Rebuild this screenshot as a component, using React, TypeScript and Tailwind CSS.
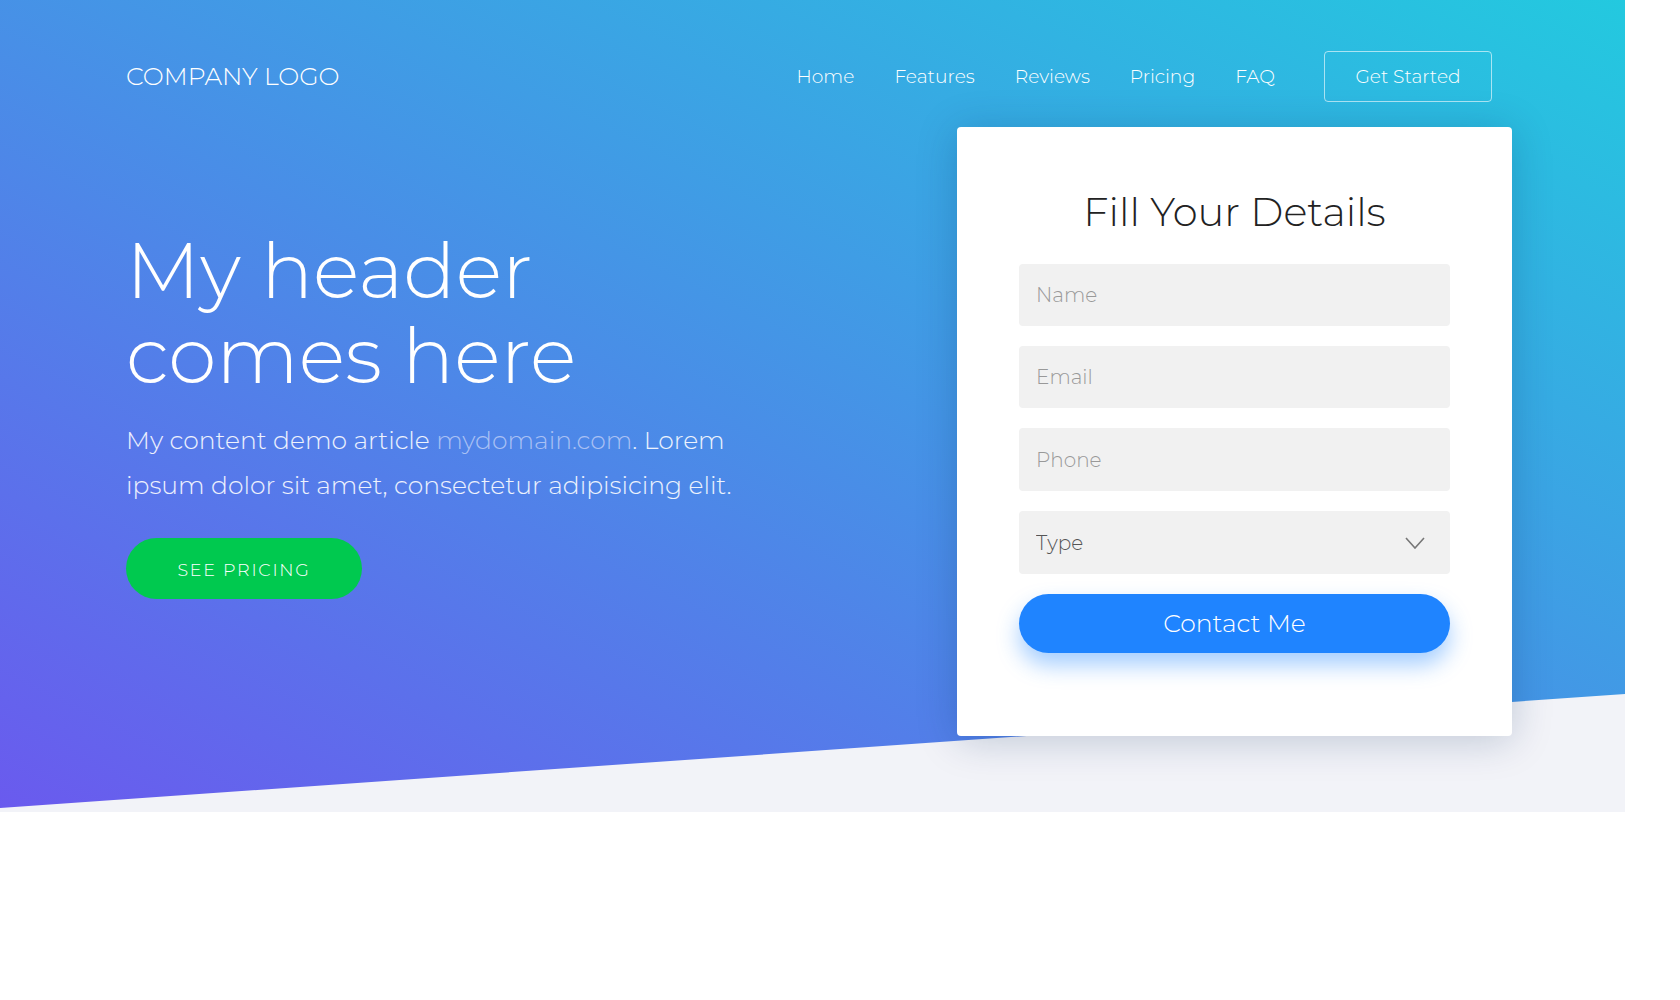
import React from "react";

const navItems = ["Home", "Features", "Reviews", "Pricing", "FAQ"];

export default function App() {
  return (
    <div className="min-h-screen w-full bg-white font-['Montserrat','Inter',sans-serif] font-light">
      <section className="relative w-[1625px] h-[812px] overflow-hidden bg-[linear-gradient(to_top_right,#6a5aee,#23c9df)]">
        {/* slanted bottom */}
        <svg
          className="absolute bottom-0 left-0 w-full h-[118px]"
          viewBox="0 0 1625 118"
          preserveAspectRatio="none"
        >
          <polygon points="0,114 1625,0 1625,118 0,118" fill="#f2f3f8" />
        </svg>

        <header className="relative flex items-center pl-[126px] pr-[133px] pt-[51px]">
          <div className="text-[25px] text-white">COMPANY LOGO</div>
          <nav className="ml-auto flex items-center gap-[40px] pt-[2px] text-[18.7px] text-white">
            {navItems.map((item) => (
              <a key={item} href="#" className="hover:opacity-80">
                {item}
              </a>
            ))}
          </nav>
          <button className="ml-[49px] h-[51px] w-[168px] rounded-[4px] border border-white/60 pt-[1px] text-[18.6px] text-white">
            Get Started
          </button>
        </header>

        <div className="relative z-10 flex pl-[126px] pt-[25px]">
          <div className="w-[831px] pt-[101px]">
            <h1 className="text-[77.5px] leading-[85px] text-white">
              My header
              <br />
              comes here
            </h1>
            <p className="mt-[20px] w-[625px] text-[25px] leading-[45px] text-white/90">
              My content demo article{" "}
              <a href="#" className="text-[#a9c0f4]">
                mydomain.com
              </a>
              . Lorem ipsum dolor sit amet, consectetur adipisicing elit.
            </p>
            <button className="mt-[30px] h-[61px] w-[236px] rounded-full bg-[#00c94f] pt-[4px] text-[17.5px] tracking-[0.1em] text-white">
              SEE PRICING
            </button>
          </div>

          <div className="w-[555px] rounded-[4px] bg-white px-[62px] pt-[61px] pb-[83px] shadow-[0_4px_40px_rgba(10,40,90,0.22)]">
            <h2 className="text-center text-[40px] leading-[48px] text-[#222]">Fill Your Details</h2>
            <form className="mt-[28px] flex flex-col gap-[20px]">
              <input
                placeholder="Name"
                className="h-[62px] w-full rounded-[4px] bg-[#f1f1f1] px-[17px] text-[20px] outline-none placeholder:text-[#999]"
              />
              <input
                placeholder="Email"
                className="h-[62px] w-full rounded-[4px] bg-[#f1f1f1] px-[17px] text-[20px] outline-none placeholder:text-[#999]"
              />
              <input
                placeholder="Phone"
                className="h-[63px] w-full rounded-[4px] bg-[#f1f1f1] px-[17px] text-[20px] outline-none placeholder:text-[#999]"
              />
              <div className="relative">
                <select className="h-[63px] w-full appearance-none rounded-[4px] bg-[#f1f1f1] px-[17px] text-[20px] text-[#555] outline-none">
                  <option>Type</option>
                  <option>Personal</option>
                  <option>Business</option>
                </select>
                <svg
                  className="pointer-events-none absolute right-[25px] top-1/2 -translate-y-1/2"
                  width="20"
                  height="12"
                  viewBox="0 0 20 12"
                  fill="none"
                  stroke="#777"
                  strokeWidth="1.6"
                >
                  <polyline points="1,1 10,11 19,1" />
                </svg>
              </div>
              <button
                type="button"
                className="h-[59px] w-full rounded-full bg-[#1f84ff] text-[25px] text-white shadow-[0_12px_22px_rgba(31,132,255,0.4)]"
              >
                Contact Me
              </button>
            </form>
          </div>
        </div>
      </section>
    </div>
  );
}
